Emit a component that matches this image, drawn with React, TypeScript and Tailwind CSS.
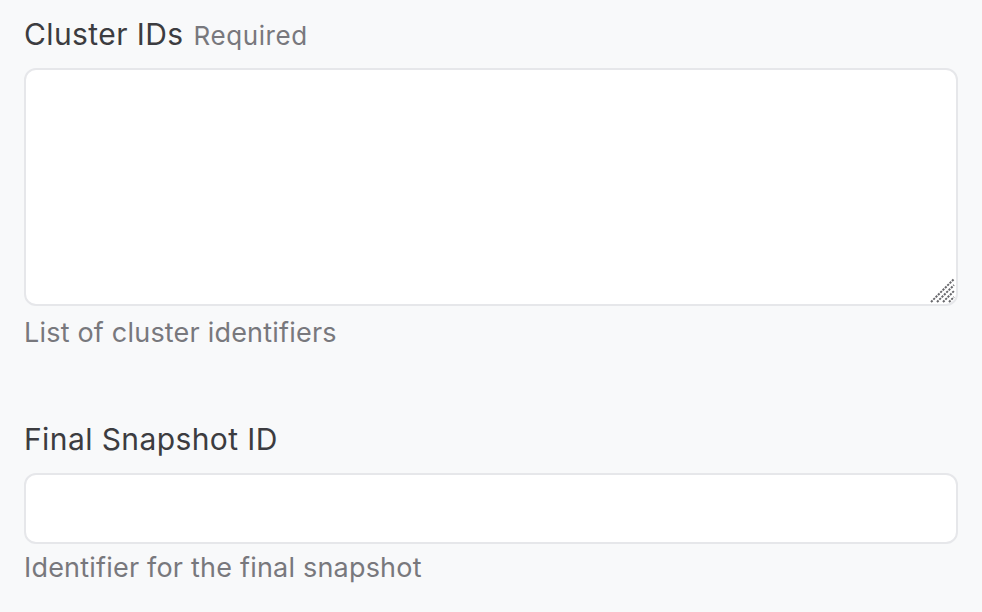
import React from "react";

function Grip() {
  return (
    <svg
      viewBox="0 0 26 26"
      className="pointer-events-none absolute bottom-[3px] right-[3px] h-[26px] w-[26px]"
      aria-hidden
    >
      <g stroke="#68686c" strokeWidth={2} strokeDasharray="2.2 1.1">
        <line x1="2" y1="25" x2="25" y2="2" />
        <line x1="8" y1="25" x2="25" y2="8" />
        <line x1="14" y1="25" x2="25" y2="14" />
        <line x1="20" y1="25" x2="25" y2="20" />
      </g>
    </svg>
  );
}

export default function App() {
  return (
    <div
      className="min-h-[612px] w-full bg-[#f8f9fa] px-6 pt-[13px] text-[#3c3c40]"
      style={{ fontFamily: "Inter, 'Noto Sans', sans-serif" }}
    >
      <div className="flex flex-col">
        <label className="flex items-baseline gap-[10px] leading-[42px]">
          <span className="text-[30px] tracking-[0.4px]">Cluster IDs</span>
          <span className="text-[26px] tracking-[0.6px] text-[#78787d]">Required</span>
        </label>
        <div className="relative mt-[11px]">
          <textarea className="block h-[238px] w-full resize-none rounded-[12px] border-2 border-[#e6e7ea] bg-white outline-none" />
          <Grip />
        </div>
        <p className="mt-[8px] text-[27px] leading-[38px] tracking-[0.2px] text-[#78787d]">
          List of cluster identifiers
        </p>
      </div>

      <div className="mt-[66px] flex flex-col">
        <label className="text-[30px] leading-[42px] tracking-[0.4px]">Final Snapshot ID</label>
        <input
          type="text"
          className="mt-[13px] block h-[71px] w-full rounded-[12px] border-2 border-[#e6e7ea] bg-white outline-none"
        />
        <p className="mt-[5px] text-[27px] leading-[38px] tracking-[0.2px] text-[#78787d]">
          Identifier for the final snapshot
        </p>
      </div>
    </div>
  );
}
